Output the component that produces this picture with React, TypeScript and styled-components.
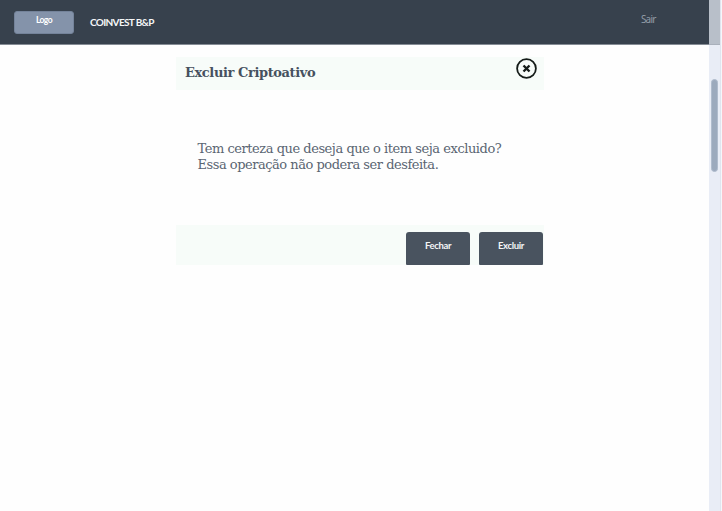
import React from "react";
import styled, { createGlobalStyle } from "styled-components";

const GlobalStyle = createGlobalStyle`
  * { box-sizing: border-box; }
  body { margin: 0; background: #fefefe; overflow: hidden; }
`;

const Page = styled.div`
  position: relative;
  width: 722px;
  height: 511px;
  overflow: hidden;
`;

const Header = styled.header`
  display: flex;
  align-items: flex-start;
  width: 709px;
  height: 45px;
  padding: 11px 0 0 14px;
  background: #37414d;
  border-bottom: 1px solid #858c95;
  font-family: Lato, sans-serif;
`;

const Logo = styled.div`
  width: 60px;
  height: 23px;
  padding-top: 3px;
  border: 1px solid #74839a;
  border-radius: 3px;
  background: #8493aa;
  color: #fff;
  font-size: 8.5px;
  font-weight: 700;
  line-height: 10px;
  letter-spacing: -0.6px;
  text-align: center;
`;

const Brand = styled.div`
  margin: 4px 0 0 16px;
  color: #f5f6f8;
  font-size: 10px;
  font-weight: 700;
  line-height: 14px;
  letter-spacing: -0.65px;
  white-space: nowrap;
`;

const Logout = styled.a`
  margin: 2px 53.5px 0 auto;
  color: #929ba6;
  font: 10px/13px "Noto Sans", sans-serif;
  letter-spacing: -0.8px;
`;

const Modal = styled.section`
  width: 368.5px;
  margin: 12px 0 0 175.5px;
`;

const TitleBar = styled.div`
  display: flex;
  justify-content: space-between;
  height: 33px;
  padding: 0 7px 0 9.5px;
  background: #f7fcf9;
`;

const Title = styled.h1`
  margin: 7px 0 0;
  color: #46515f;
  font: 700 13px/17px "DejaVu Serif", serif;
  letter-spacing: -0.4px;
  white-space: nowrap;
`;

const CloseIcon = styled.svg`
  display: block;
  width: 22px;
  height: 22px;
`;

const Message = styled.div`
  height: 135px;
  padding: 51px 0 0 22px;
  color: #5a6572;
  font: 13px/16px "DejaVu Serif", serif;
  white-space: nowrap;
`;

const Line = styled.div<{ $spacing: number }>`
  letter-spacing: ${({ $spacing }) => $spacing}px;
`;

const Actions = styled.div`
  display: flex;
  justify-content: flex-end;
  gap: 9px;
  height: 40px;
  padding: 7px 1px 0 0;
  background: #f7fcf9;
`;

const Button = styled.button`
  width: 64px;
  height: 33px;
  padding: 0 0 6px;
  border: 0;
  border-radius: 3px 3px 1px 1px;
  background: #49535f;
  color: #f4f5f6;
  font: 700 9.5px/12px Lato, sans-serif;
  letter-spacing: -0.35px;
`;

const Scrollbar = styled.div`
  position: absolute;
  top: 0;
  right: 0;
  width: 13px;
  height: 511px;
  padding: 79px 0 0 2px;
  background: linear-gradient(to right, transparent 11px, #e0e5ef 11px, #e0e5ef 12px, #f5f7fb 12px),
    linear-gradient(#b8bfc9 44px, #a9b0bb 44px, #a9b0bb 45px, #e9edf6 45px);
`;

const Thumb = styled.div`
  width: 7px;
  height: 93px;
  border: 1px solid #b0bccd;
  border-radius: 4px;
  background: #9caabd;
`;

export default function App() {
  return (
    <Page>
      <GlobalStyle />
      <Header>
        <Logo>Logo</Logo>
        <Brand>COINVEST B&amp;P</Brand>
        <Logout>Sair</Logout>
      </Header>
      <Modal>
        <TitleBar>
          <Title>Excluir Criptoativo</Title>
          <CloseIcon viewBox="0 0 22 22" fill="none" stroke="#151c19">
            <circle cx="11.5" cy="11.5" r="9.4" strokeWidth="1.8" />
            <path d="M8.5 8.5l6 6M14.5 8.5l-6 6" strokeWidth="2.4" />
          </CloseIcon>
        </TitleBar>
        <Message>
          <Line $spacing={-0.46}>Tem certeza que deseja que o item seja excluido?</Line>
          <Line $spacing={-0.48}>Essa operação não podera ser desfeita.</Line>
        </Message>
        <Actions>
          <Button>Fechar</Button>
          <Button>Excluir</Button>
        </Actions>
      </Modal>
      <Scrollbar>
        <Thumb />
      </Scrollbar>
    </Page>
  );
}
